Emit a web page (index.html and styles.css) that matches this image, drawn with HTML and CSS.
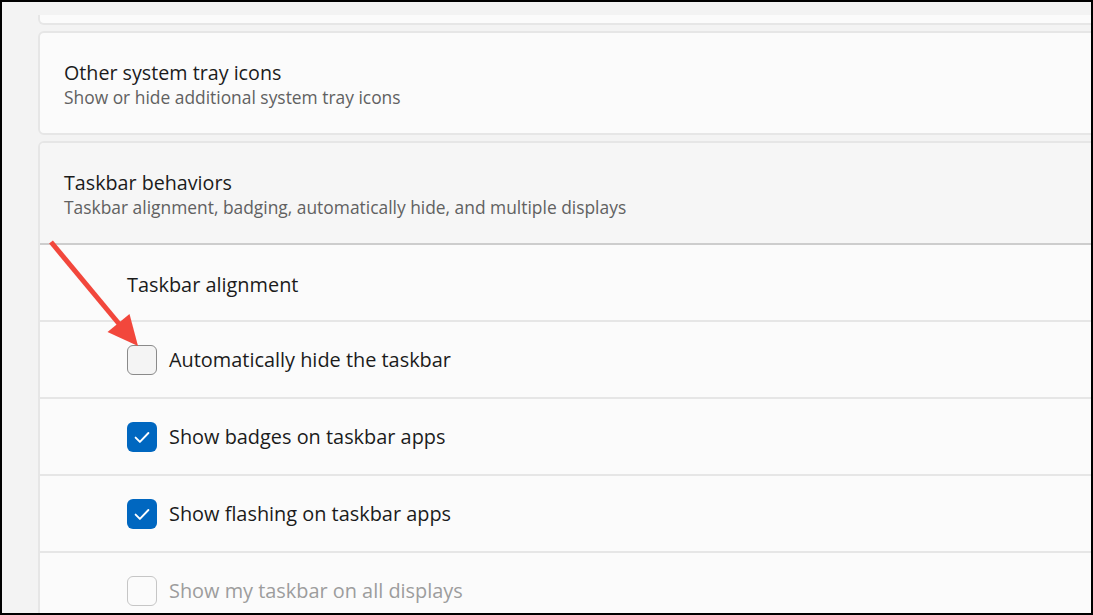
FILE: index.html
```html
<!DOCTYPE html>
<html>
<head>
<meta charset="utf-8">
<link rel="stylesheet" href="styles.css">
</head>
<body>
<div class="frame">
  <div class="content">
    <div class="card card-tail"></div>
    <div class="card setting">
      <div class="title">Other system tray icons</div>
      <div class="desc">Show or hide additional system tray icons</div>
    </div>
    <div class="card group">
      <div class="group-head">
        <div class="title">Taskbar behaviors</div>
        <div class="desc">Taskbar alignment, badging, automatically hide, and multiple displays</div>
      </div>
      <div class="row row-plain"><span class="label">Taskbar alignment</span></div>
      <div class="row"><span class="cb"></span><span class="label">Automatically hide the taskbar</span></div>
      <div class="row"><span class="cb checked"><svg viewBox="0 0 30 30" width="30" height="30"><path d="M8.6 15.6 L12.9 19.9 L21.4 11" fill="none" stroke="#fff" stroke-width="1.9" stroke-linecap="round" stroke-linejoin="round"/></svg></span><span class="label">Show badges on taskbar apps</span></div>
      <div class="row"><span class="cb checked"><svg viewBox="0 0 30 30" width="30" height="30"><path d="M8.6 15.6 L12.9 19.9 L21.4 11" fill="none" stroke="#fff" stroke-width="1.9" stroke-linecap="round" stroke-linejoin="round"/></svg></span><span class="label">Show flashing on taskbar apps</span></div>
      <div class="row disabled"><span class="cb"></span><span class="label">Show my taskbar on all displays</span></div>
    </div>
  </div>
  <svg class="arrow" width="1093" height="615" viewBox="0 0 1093 615">
    <line x1="51" y1="242" x2="120" y2="325" stroke="#f2473c" stroke-width="5" stroke-linecap="butt"/>
    <polygon points="138,346 129.5,314 107.5,332" fill="#f2473c"/>
  </svg>
</div>
</body>
</html>
```
FILE: styles.css
```css
html, body {
  margin: 0;
  padding: 0;
}
body {
  font-family: "Open Sans", "Noto Sans", sans-serif;
  background: #f3f3f3;
}
.frame {
  position: relative;
  width: 1093px;
  height: 615px;
  box-sizing: border-box;
  border: 2px solid #000;
  background: #f3f3f3;
  overflow: hidden;
}
.content {
  padding: 13px 0 0 36px;
  margin-right: -40px;
  display: flex;
  flex-direction: column;
  gap: 6px;
}
.card {
  background: #fbfbfb;
  border: 2px solid #e6e6e6;
  border-radius: 6px;
}
.card-tail {
  height: 8px;
  border-top: 0;
  border-radius: 0 0 6px 6px;
}
.setting {
  height: 100px;
  box-sizing: content-box;
  padding: 0 0 0 24px;
  display: flex;
  flex-direction: column;
  justify-content: center;
}
.title {
  font-size: 19.7px;
  line-height: 25px;
  color: #1b1b1b;
  padding-top: 4px;
}
.desc {
  font-size: 17.4px;
  line-height: 25px;
  color: #616161;
}
.group {
  border-radius: 6px 6px 0 0;
}
.group-head {
  height: 100px;
  background: #f6f6f6;
  border-bottom: 2px solid #cdcdcd;
  padding-left: 24px;
  display: flex;
  flex-direction: column;
  justify-content: center;
  border-radius: 4px 4px 0 0;
}
.row {
  height: 75px;
  border-bottom: 2px solid #e6e6e6;
  padding-left: 87px;
  display: flex;
  align-items: center;
  gap: 12px;
}
.row-plain .label {
  padding-top: 4px;
}
.label {
  font-size: 19.9px;
  line-height: 26px;
  color: #1b1b1b;
}
.cb {
  width: 30px;
  height: 30px;
  box-sizing: border-box;
  border: 1.5px solid #8a8a8a;
  border-radius: 6px;
  background: #f4f4f4;
  flex: none;
  display: flex;
  align-items: center;
  justify-content: center;
}
.cb.checked {
  background: #0067c0;
  border: 0;
}
.disabled .cb {
  border-color: #c6c6c6;
  background: #fbfbfb;
}
.disabled .label {
  color: #9d9d9d;
}
.arrow {
  position: absolute;
  left: -2px;
  top: -2px;
  pointer-events: none;
}
```
